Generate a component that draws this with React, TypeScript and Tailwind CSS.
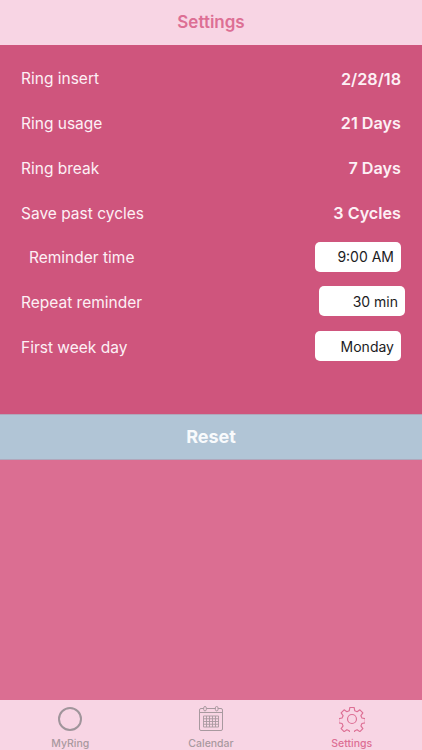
import React from 'react';

const font = { fontFamily: 'Inter, "Liberation Sans", sans-serif' };

function Row({ label, value }: { label: string; value: string }) {
  return (
    <div className="flex h-[44.8px] items-center justify-between pl-[21px] pr-[21px]">
      <span className="text-[15.5px] text-[#fdf0f5]">{label}</span>
      <span className="text-[16.2px] font-semibold text-[#fdf0f5]">{value}</span>
    </div>
  );
}

function PickerRow({ label, value, boxClass, labelClass }: { label: string; value: string; boxClass: string; labelClass: string }) {
  return (
    <div className="flex h-[44.8px] items-center justify-between">
      <span className={`pt-[2px] text-[15.5px] text-[#fdf0f5] ${labelClass}`}>{label}</span>
      <div className={`flex h-[30px] items-center justify-end rounded-[5px] bg-white pr-[7px] text-[14px] text-[#1c1c1e] ${boxClass}`}>
        {value}
      </div>
    </div>
  );
}

function CalendarIcon() {
  return (
    <svg width="26" height="26" viewBox="0 0 26 26" fill="none" stroke="#a8999f" strokeWidth="1">
      <rect x="1.5" y="2.5" width="23" height="22" rx="1.5" />
      <path d="M1.5 6.5h23" />
      <rect x="5.7" y="0.5" width="2.6" height="4.4" rx="1.3" fill="#f8d5e4" />
      <rect x="17.4" y="0.5" width="2.6" height="4.4" rx="1.3" fill="#f8d5e4" />
      <path d="M5.5 10h15v11h-15zM5.5 12.75h15M5.5 15.5h15M5.5 18.25h15M8.5 10v11M11.5 10v11M14.5 10v11M17.5 10v11" strokeWidth="0.9" />
    </svg>
  );
}

function GearIcon() {
  return (
    <svg width="26" height="26" viewBox="0 0 28 28" fill="none" stroke="#dd6f94" strokeWidth="1.25" strokeLinejoin="round">
      <circle cx="14" cy="14" r="4.8" />
      <path d="M11.7 1.6h4.6l.7 3.6 2.5 1 3-2.1 3.2 3.3-2.1 3 1.1 2.5 3.6.7v4.6l-3.6.7-1.1 2.5 2.1 3-3.2 3.2-3-2.1-2.5 1.1-.7 3.6h-4.6l-.7-3.6-2.5-1.1-3 2.1-3.2-3.2 2.1-3-1.1-2.5-3.6-.7v-4.6l3.6-.7 1.1-2.5-2.1-3 3.2-3.3 3 2.1 2.5-1z" />
    </svg>
  );
}

function Tab({ label, icon, color }: { label: string; icon: React.ReactNode; color: string }) {
  return (
    <div className="flex flex-col items-center">
      <div className="flex h-[37px] items-center">{icon}</div>
      <span className={`mt-[1px] text-[10.5px] font-medium leading-[12px] ${color}`}>{label}</span>
    </div>
  );
}

export default function App() {
  return (
    <div className="flex h-[750px] w-[422px] flex-col overflow-hidden bg-[#db6e92]" style={font}>
      <header className="flex h-[45px] items-center justify-center bg-[#f8d5e4]">
        <span className="text-[17px] font-semibold text-[#dd6f94]">Settings</span>
      </header>

      <main className="h-[369px] bg-[#cf557d] pt-[11.4px]">
        <Row label="Ring insert" value="2/28/18" />
        <Row label="Ring usage" value="21 Days" />
        <Row label="Ring break" value="7 Days" />
        <Row label="Save past cycles" value="3 Cycles" />
        <div className="-mt-[1.4px]">
          <PickerRow label="Reminder time" value="9:00 AM" boxClass="mr-[21px] w-[86px]" labelClass="ml-[29px]" />
          <PickerRow label="Repeat reminder" value="30 min" boxClass="mr-[17px] w-[86px]" labelClass="ml-[21px]" />
          <PickerRow label="First week day" value="Monday" boxClass="mr-[21px] w-[86px]" labelClass="ml-[21px]" />
        </div>
      </main>

      <button className="flex h-[46px] items-center justify-center border-y border-[#b0a7bb] bg-[#b1c5d6] pb-[1px] text-[18px] font-bold text-[#f8fafc]">
        Reset
      </button>

      <div className="flex-1" />

      <nav className="grid h-[50px] grid-cols-3 bg-[#f8d5e4]">
        <Tab
          label="MyRing"
          color="text-[#a8999f]"
          icon={
            <svg width="26" height="26" viewBox="0 0 26 26" fill="none" stroke="#a0959b" strokeWidth="2">
              <circle cx="13" cy="13" r="11" />
            </svg>
          }
        />
        <Tab label="Calendar" color="text-[#a8999f]" icon={<CalendarIcon />} />
        <Tab label="Settings" color="text-[#dd6f94]" icon={<GearIcon />} />
      </nav>
    </div>
  );
}
